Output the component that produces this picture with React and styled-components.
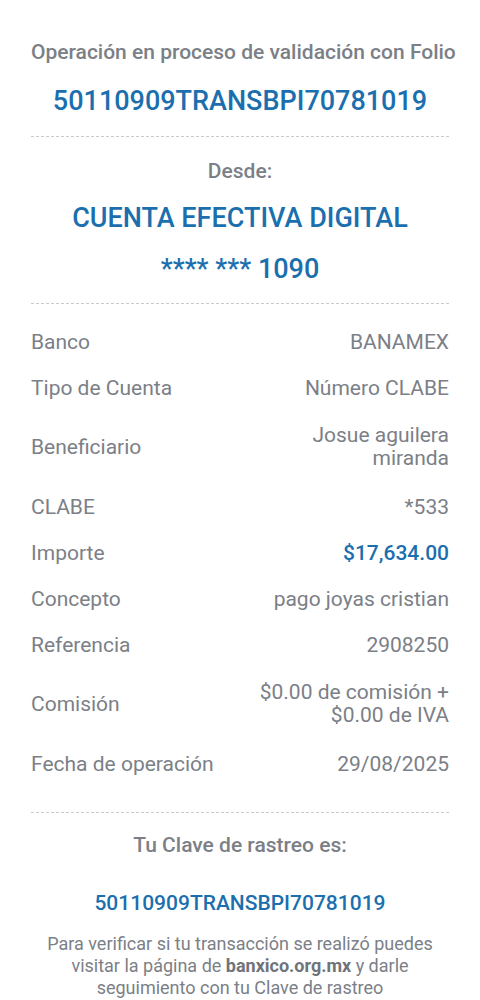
import React from "react";
import styled, { createGlobalStyle } from "styled-components";

const GRAY = "#7b8087";
const BLUE = "#1b6fae";

const Global = createGlobalStyle`
  html, body { margin: 0; padding: 0; background: #ffffff; }
  body { font-family: Roboto, "Noto Sans", "Liberation Sans", sans-serif; -webkit-font-smoothing: antialiased; }
`;

const Page = styled.div`
  width: 480px;
  padding: 39px 31px 0;
  box-sizing: border-box;
  display: flex;
  flex-direction: column;
`;

const Heading = styled.div`
  text-align: center;
  color: ${GRAY};
  font-size: 21px;
  font-weight: 500;
  line-height: 26px;
  white-space: nowrap;
  margin-top: ${(p) => p.$mt || 0}px;
`;

const Highlight = styled.div`
  text-align: center;
  color: ${BLUE};
  font-size: ${(p) => p.$size}px;
  font-weight: 500;
  line-height: ${(p) => p.$lh || 32}px;
  margin-top: ${(p) => p.$mt || 0}px;
`;

const Divider = styled.hr`
  border: none;
  border-top: 1px dashed #c9cbce;
  margin: ${(p) => p.$mt || 0}px 0 0;
  height: 0;
`;

const Rows = styled.div`
  display: flex;
  flex-direction: column;
  margin-top: ${(p) => p.$mt || 0}px;
`;

const Row = styled.div`
  display: flex;
  justify-content: space-between;
  align-items: center;
  min-height: 46px;
  box-sizing: border-box;
  font-size: 21px;
  line-height: 23px;
  color: ${GRAY};
  padding: ${(p) => (p.$multi ? "13px 0 14px" : "0")};
`;

const Label = styled.span`
  flex-shrink: 0;
`;

const Value = styled.span`
  text-align: right;
  max-width: 215px;
  color: ${(p) => (p.$accent ? BLUE : GRAY)};
  font-weight: ${(p) => (p.$accent ? 500 : 400)};
`;

const Paragraph = styled.p`
  margin: ${(p) => p.$mt || 0}px 0 0;
  text-align: center;
  color: ${GRAY};
  font-size: 18px;
  line-height: 22px;
  padding: 0 10px;
  b { font-weight: 700; color: #6f747b; }
`;

const rows = [
  { label: "Banco", value: "BANAMEX" },
  { label: "Tipo de Cuenta", value: "Número CLABE" },
  { label: "Beneficiario", value: "Josue aguilera miranda", multi: true },
  { label: "CLABE", value: "*533" },
  { label: "Importe", value: "$17,634.00", accent: true },
  { label: "Concepto", value: "pago joyas cristian" },
  { label: "Referencia", value: "2908250" },
  { label: "Comisión", value: "$0.00 de comisión + $0.00 de IVA", multi: true },
  { label: "Fecha de operación", value: "29/08/2025" },
];

export default function App() {
  return (
    <>
      <Global />
      <Page>
        <Heading>Operación en proceso de validación con Folio</Heading>
        <Highlight $size={27} $mt={20}>50110909TRANSBPI70781019</Highlight>
        <Divider $mt={19} />
        <Heading $mt={21}>Desde:</Heading>
        <Highlight $size={27} $mt={18}>CUENTA EFECTIVA DIGITAL</Highlight>
        <Highlight $size={27} $mt={19}>**** *** 1090</Highlight>
        <Divider $mt={18} />
        <Rows $mt={15}>
          {rows.map((r) => (
            <Row key={r.label} $multi={r.multi}>
              <Label>{r.label}</Label>
              <Value $accent={r.accent}>{r.value}</Value>
            </Row>
          ))}
        </Rows>
        <Divider $mt={25} />
        <Heading $mt={19}>Tu Clave de rastreo es:</Heading>
        <Highlight $size={21} $lh={26} $mt={32}>50110909TRANSBPI70781019</Highlight>
        <Paragraph $mt={17}>
          Para verificar si tu transacción se realizó puedes visitar la página de <b>banxico.org.mx</b> y darle seguimiento con tu Clave de rastreo
        </Paragraph>
      </Page>
    </>
  );
}
